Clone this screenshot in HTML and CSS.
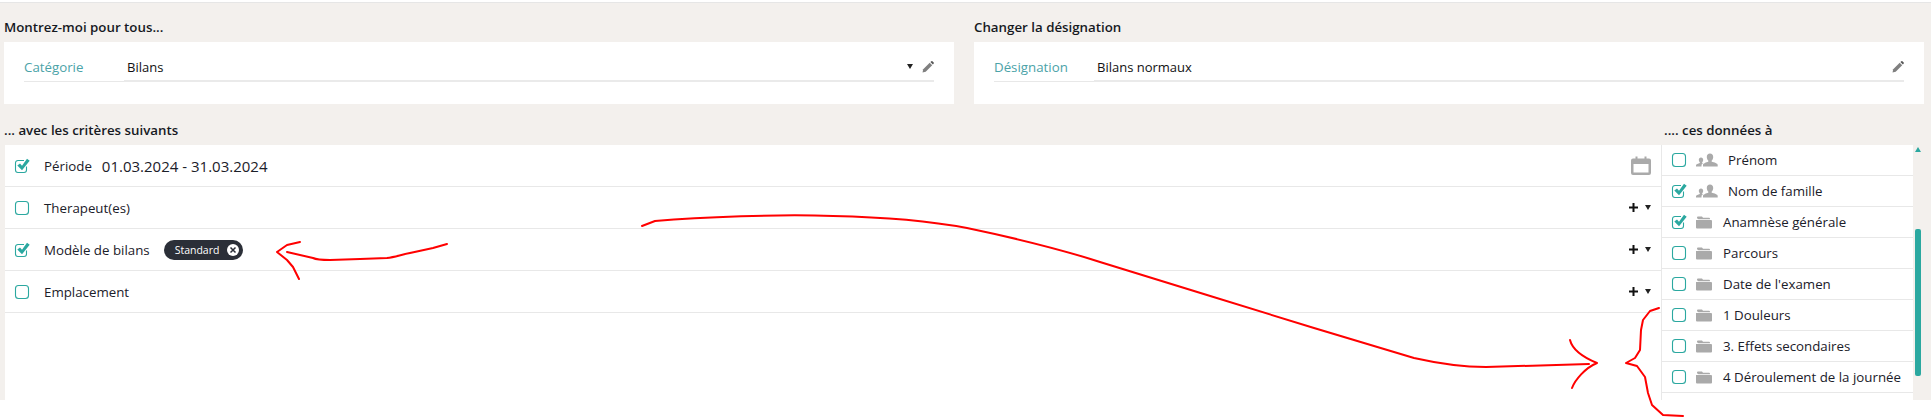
FILE: index.html
```html
<!DOCTYPE html>
<html lang="fr">
  <head>
    <meta charset="UTF-8" />
    <meta name="viewport" content="width=device-width, initial-scale=1.0" />
    <title>Statistiques</title>
    <link rel="stylesheet" href="styles.css">
  </head>
  <body>
    <svg class="defs" width="0" height="0">
      <symbol id="box" viewBox="0 0 16 16">
        <rect x="1.5" y="1.5" width="13" height="13" rx="3" fill="#fff" stroke="#2ba8a0" stroke-width="1.1" />
      </symbol>
      <symbol id="box-on" viewBox="0 0 16 16">
        <path d="M12.5 8.500v3.500a2.500 2.500 0 0 1-2.500 2.500H4A2.500 2.500 0 0 1 1.500 12V5A2.500 2.500 0 0 1 4 2.500h6" fill="none" stroke="#2ba8a0" stroke-width="1.100" />
        <path d="M3.300 7.500l2.700-2 2 2.300L13 0.800l2.700 2L8 12.200z" fill="#2ba8a0" />
      </symbol>
      <symbol id="pencil" viewBox="0 0 12 12">
        <path d="M0.500 11.500l0.700-3.200 6.500-6.500 2.500 2.500-6.500 6.500z" fill="#808080" />
        <path d="M8.400 1.100l1-0.800a0.800 0.800 0 0 1 1 0l1.300 1.300a0.800 0.800 0 0 1 0 1l-0.800 1z" fill="#555" />
      </symbol>
      <symbol id="people" viewBox="0 0 22 14">
        <path d="M14 0.500c2 0 3.200 1.500 3.200 3.500 0 1.500-0.600 2.800-1.500 3.600v1.200c2.600 0.700 6 1.500 6 3.200V13.500H7v-1.500c0-1.700 3.200-2.500 5.300-3.200V7.600c-0.900-0.800-1.500-2.100-1.500-3.600 0-2 1.200-3.500 3.200-3.500z" fill="#aaa" />
        <path d="M5 4.500c1.400 0 2.200 1 2.200 2.400 0 1-0.400 1.800-1 2.400v0.600l0.800 0.400c-0.800 0.500-1.400 1.100-1.500 2v1.200H0v-1.300c0-1.200 2.300-1.800 3.800-2.300v-0.600c-0.600-0.600-1-1.400-1-2.400 0-1.400 0.800-2.400 2.200-2.400z" fill="#aaa" />
      </symbol>
      <symbol id="folder" viewBox="0 0 16 13">
        <path d="M1 2.200V1.500A1 1 0 0 1 2 0.500h4l1 1.300h6a1 1 0 0 1 1 1v0.400H2.500z" fill="#aaa" />
        <path d="M0 4h15a1 1 0 0 1 1 1v6.500a1 1 0 0 1-1 1H1a1 1 0 0 1-1-1z" fill="#aaa" />
      </symbol>
      <symbol id="plus" viewBox="0 0 9 9">
        <path d="M3.500 0h2v3.500H9v2H5.500V9h-2V5.500H0v-2h3.500z" fill="#111" />
      </symbol>
    </svg>

    <div class="page">
      <!-- choix de la categorie et designation -->
      <div class="top-grid">
        <section>
          <h2 class="title title-top">Montrez-moi pour tous...</h2>
          <div class="panel">
            <span class="field-label">Catégorie</span>
            <div class="field-value">
              <span class="value-text">Bilans</span>
              <i class="caret caret-field"></i>
              <svg class="pencil"><use href="#pencil" /></svg>
            </div>
          </div>
        </section>
        <section>
          <h2 class="title title-top">Changer la désignation</h2>
          <div class="panel">
            <span class="field-label">Désignation</span>
            <div class="field-value">
              <span class="value-text">Bilans normaux</span>
              <svg class="pencil"><use href="#pencil" /></svg>
            </div>
          </div>
        </section>
      </div>

      <div class="bottom">
        <section class="criteria">
          <h2 class="title title-list">... avec les critères suivants</h2>
          <div class="criteria-box">
            <div class="crit-row">
              <svg class="check"><use href="#box-on" /></svg>
              <span class="crit-label">Période</span>
              <span class="crit-date">01.03.2024 - 31.03.2024</span>
              <svg class="calendar" viewBox="0 0 20 19">
                <path d="M2 2.500h2.500V0.500h2v2h7v-2h2v2H18a2 2 0 0 1 2 2v12.500a2 2 0 0 1-2 2H2a2 2 0 0 1-2-2V4.500a2 2 0 0 1 2-2z M2.500 8v8.500h15V8z" fill="#aaa" fill-rule="evenodd" />
              </svg>
            </div>
            <div class="crit-row">
              <svg class="check"><use href="#box" /></svg>
              <span class="crit-label">Therapeut(es)</span>
              <div class="crit-actions"><svg class="plus"><use href="#plus" /></svg><i class="caret"></i></div>
            </div>
            <div class="crit-row">
              <svg class="check"><use href="#box-on" /></svg>
              <span class="crit-label">Modèle de bilans</span>
              <span class="chip">Standard
                <svg class="chip-x" viewBox="0 0 12 12">
                  <circle cx="6" cy="6" r="6" fill="#fff" />
                  <path d="M3.500 3.500l5 5M8.500 3.500l-5 5" stroke="#2b2f38" stroke-width="1.500" />
                </svg>
              </span>
              <div class="crit-actions"><svg class="plus"><use href="#plus" /></svg><i class="caret"></i></div>
            </div>
            <div class="crit-row">
              <svg class="check"><use href="#box" /></svg>
              <span class="crit-label">Emplacement</span>
              <div class="crit-actions"><svg class="plus"><use href="#plus" /></svg><i class="caret"></i></div>
            </div>
          </div>
        </section>

        <section class="data">
          <h2 class="title title-list title-data">.... ces données à</h2>
          <div class="data-wrap">
            <ul class="data-list">
              <li><svg class="check"><use href="#box" /></svg><svg class="people"><use href="#people" /></svg><span>Prénom</span></li>
              <li><svg class="check"><use href="#box-on" /></svg><svg class="people"><use href="#people" /></svg><span>Nom de famille</span></li>
              <li><svg class="check"><use href="#box-on" /></svg><svg class="folder"><use href="#folder" /></svg><span>Anamnèse générale</span></li>
              <li><svg class="check"><use href="#box" /></svg><svg class="folder"><use href="#folder" /></svg><span>Parcours</span></li>
              <li><svg class="check"><use href="#box" /></svg><svg class="folder"><use href="#folder" /></svg><span>Date de l'examen</span></li>
              <li><svg class="check"><use href="#box" /></svg><svg class="folder"><use href="#folder" /></svg><span>1 Douleurs</span></li>
              <li><svg class="check"><use href="#box" /></svg><svg class="folder"><use href="#folder" /></svg><span>3. Effets secondaires</span></li>
              <li><svg class="check"><use href="#box" /></svg><svg class="folder"><use href="#folder" /></svg><span>4 Déroulement de la journée</span></li>
            </ul>
            <div class="scrollbar">
              <i class="scroll-up"></i>
              <i class="scroll-thumb"></i>
            </div>
          </div>
        </section>
      </div>
    </div>

    <!-- annotations a la main par dessus la capture -->
    <svg class="marks" width="1931" height="417" viewBox="0 0 1931 417">
      <g fill="none" stroke="#f00" stroke-width="2" stroke-linejoin="round" stroke-linecap="round">
        <path d="M447 244L433 248L410 253C400 255 395 257 387 258L360 259L330 260C320 260 315 259 313 258L287 252" />
        <path d="M300 242L287 245L277 252L287 260L293 267L299 279" />
        <path d="M642 226L655 221C700 217 780 214 833 216C880 217 930 221 967 228C1010 237 1060 249 1100 262L1207 295L1314 328L1414 358C1445 365 1465 367 1486 367L1589 364" />
        <path d="M1570 340C1572 348 1580 356 1597 363C1585 368 1575 380 1572 388" />
        <path d="M1659 308L1650 311L1643 320L1641 330L1640 350L1635 358L1626 363L1637 366L1645 377L1648 393L1652 405L1663 415L1683 416" />
      </g>
    </svg>
  </body>
</html>
```

FILE: styles.css
```css
* {
  box-sizing: border-box;
}
html,
body {
  margin: 0;
  padding: 0;
  background: #fff;
  overflow: hidden;
}
body {
  position: relative;
  width: 1931px;
  height: 417px;
  font-family: "Open Sans", "Noto Sans", sans-serif;
  font-size: 13.300px;
  color: #1b2029;
}
.defs {
  position: absolute;
}
.page {
  height: 398px;
  margin-top: 2px;
  border-top: 1px solid #e6e6e6;
  background: #f3f0ed;
}
.top-grid {
  display: grid;
  grid-template-columns: 950px 950px;
  column-gap: 20px;
  padding-left: 4px;
}
.title {
  margin: 0;
  font-size: 13.300px;
  font-weight: 600;
  color: #16191f;
}
.title-top {
  height: 39px;
  padding-top: 14px;
  line-height: 20px;
}
.title-list {
  height: 41px;
  padding-top: 16px;
  line-height: 20px;
}
.panel {
  display: flex;
  height: 62px;
  padding: 12px 20px;
  background: #fff;
}
.field-label {
  flex: none;
  width: 100px;
  height: 28px;
  line-height: 27px;
  border-bottom: 1px solid #e8e8e8;
  color: #4ba3a8;
}
.field-value {
  flex: 1;
  display: flex;
  align-items: center;
  height: 28px;
  padding: 0 0 1px 3px;
  border-bottom: 2px solid #eaeaea;
}
.value-text {
  flex: 1;
  font-size: 13px;
  color: #111;
}
.caret {
  display: inline-block;
  width: 0;
  height: 0;
  border-left: 3.500px solid transparent;
  border-right: 3.500px solid transparent;
  border-top: 5px solid #222;
}
.caret-field {
  margin-right: 9px;
}
.pencil {
  width: 12px;
  height: 12px;
}
.bottom {
  display: flex;
  height: 296px;
}
.criteria {
  width: 1662px;
  padding-left: 4px;
}
.criteria-box {
  height: 255px;
  margin-left: 1px;
  background: #fff;
  border-right: 1px solid #e8e8e8;
}
.crit-row {
  display: flex;
  align-items: center;
  height: 42px;
  padding: 0 10px 0 9px;
  border-bottom: 1px solid #e8e8e8;
}
.check {
  flex: none;
  width: 16px;
  height: 16px;
}
.crit-label {
  margin-left: 14px;
  font-size: 13.300px;
}
.crit-date {
  margin-left: 10px;
  font-size: 15px;
}
.calendar {
  width: 20px;
  height: 19px;
  margin-left: auto;
}
.crit-actions {
  display: flex;
  align-items: center;
  gap: 7px;
  margin-left: auto;
}
.plus {
  width: 9px;
  height: 9px;
}
.chip {
  display: flex;
  align-items: center;
  height: 20px;
  margin-left: 14px;
  padding: 0 4px 0 11px;
  border-radius: 10px;
  background: #2b2f38;
  color: #fff;
  font-size: 10.500px;
}
.chip-x {
  width: 12px;
  height: 12px;
  margin-left: 8px;
}
.data {
  width: 269px;
}
.title-data {
  padding-left: 2px;
}
.data-wrap {
  display: flex;
  height: 255px;
}
.data-list {
  width: 251px;
  margin: 0;
  padding: 0;
  list-style: none;
  background: #fff;
}
.data-list li {
  display: flex;
  align-items: center;
  height: 31px;
  padding-left: 9px;
  border-bottom: 1px solid #e8e8e8;
}
.people {
  width: 22px;
  height: 14px;
  margin-left: 9px;
  margin-right: 10px;
}
.folder {
  width: 16px;
  height: 13px;
  margin-left: 9px;
  margin-right: 11px;
}
.scrollbar {
  flex: none;
  width: 8px;
  margin-left: 2px;
}
.scroll-up {
  display: block;
  width: 0;
  height: 0;
  margin-top: 2px;
  border-left: 3px solid transparent;
  border-right: 3px solid transparent;
  border-bottom: 5px solid #2ba8a0;
}
.scroll-thumb {
  display: block;
  width: 6px;
  height: 147px;
  margin-top: 77px;
  border-radius: 2px;
  background: #2ba8a0;
}
.marks {
  position: absolute;
  left: 0;
  top: 0;
  pointer-events: none;
}
```
